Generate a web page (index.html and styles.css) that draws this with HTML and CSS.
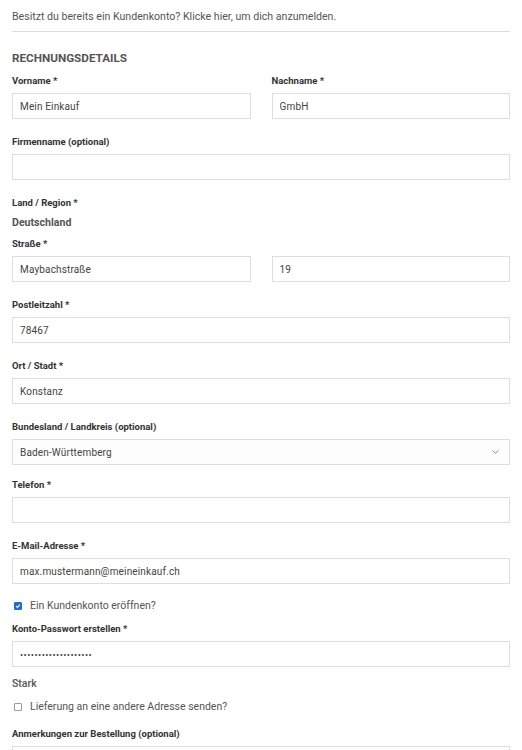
FILE: index.html
```html
<!DOCTYPE html>
<html lang="de">
<head>
<meta charset="utf-8">
<title>Kasse</title>
<link rel="stylesheet" href="styles.css">
</head>
<body>
<div class="page">
  <p class="login-note">Besitzt du bereits ein Kundenkonto? <a href="#" class="login-link">Klicke hier, um dich anzumelden.</a></p>
  <hr class="divider">
  <h3 class="section-title">RECHNUNGSDETAILS</h3>

  <div class="row two">
    <div class="field">
      <label class="label">Vorname *</label>
      <input class="input" type="text" value="Mein Einkauf">
    </div>
    <div class="field">
      <label class="label">Nachname *</label>
      <input class="input" type="text" value="GmbH">
    </div>
  </div>

  <div class="field">
    <label class="label">Firmenname (optional)</label>
    <input class="input" type="text" value="">
  </div>

  <div class="field field-static">
    <label class="label">Land / Region *</label>
    <strong class="static-value">Deutschland</strong>
  </div>

  <div class="field">
    <label class="label">Straße *</label>
    <div class="row two inner">
      <input class="input" type="text" value="Maybachstraße">
      <input class="input" type="text" value="19">
    </div>
  </div>

  <div class="field">
    <label class="label">Postleitzahl *</label>
    <input class="input" type="text" value="78467">
  </div>

  <div class="field">
    <label class="label">Ort / Stadt *</label>
    <input class="input" type="text" value="Konstanz">
  </div>

  <div class="field field-tight">
    <label class="label">Bundesland / Landkreis (optional)</label>
    <div class="select">
      <span class="select-value">Baden-Württemberg</span>
      <svg class="chevron" width="7" height="4" viewBox="0 0 7 4"><path d="M0.5 0.5 L3.5 3.3 L6.5 0.5" fill="none" stroke="#888" stroke-width="1"/></svg>
    </div>
  </div>

  <div class="field">
    <label class="label">Telefon *</label>
    <input class="input" type="tel" value="">
  </div>

  <div class="field field-tight">
    <label class="label">E-Mail-Adresse *</label>
    <input class="input" type="email" value="max.mustermann@meineinkauf.ch">
  </div>

  <label class="check-row check-account">
    <span class="box checked"><svg width="8" height="8" viewBox="0 0 8 8"><path d="M1.5 4.2 L3.2 5.9 L6.6 2.2" fill="none" stroke="#fff" stroke-width="1.4"/></svg></span>
    <span class="check-text">Ein Kundenkonto eröffnen?</span>
  </label>

  <div class="field field-pass">
    <label class="label">Konto-Passwort erstellen *</label>
    <input class="input input-pass" type="password" value="abcdefghijklmnopqrst">
  </div>

  <div class="strength">Stark</div>

  <label class="check-row check-ship">
    <span class="box"></span>
    <span class="check-text">Lieferung an eine andere Adresse senden?</span>
  </label>

  <div class="field">
    <label class="label">Anmerkungen zur Bestellung (optional)</label>
    <textarea class="input textarea"></textarea>
  </div>
</div>
</body>
</html>
```

FILE: styles.css
```css
* { box-sizing: border-box; }

html, body {
  margin: 0;
  padding: 0;
  background: #fff;
}

body {
  font-family: Roboto, "Liberation Sans", Arial, sans-serif;
  color: #555;
}

.page {
  padding: 8px 12px 0 12px;
}

.login-note {
  margin: 0 0 5px;
  font-size: 10.6px;
  line-height: 18px;
  color: #555;
}

.login-link {
  color: #555;
  text-decoration: none;
}

.divider {
  border: 0;
  border-top: 1px solid #dcdcdc;
  margin: 0 0 18px;
  height: 0;
}

.section-title {
  margin: 0 0 8px;
  font-size: 11.7px;
  line-height: 16px;
  font-weight: 700;
  color: #555;
}

.row.two {
  display: grid;
  grid-template-columns: 1fr 1fr;
  column-gap: 21px;
}

.field {
  display: flex;
  flex-direction: column;
  margin-bottom: 16px;
}

.row.two > .field { margin-bottom: 16px; }

.field-static { margin-bottom: 6px; }
.field-tight { margin-bottom: 13px; }
.field-pass { margin-bottom: 9px; }

.label {
  display: block;
  font-size: 9.5px;
  line-height: 14px;
  font-weight: 700;
  color: #333;
  margin-bottom: 5px;
}

.static-value {
  font-size: 10.6px;
  line-height: 16px;
  font-weight: 700;
  color: #555;
}

.input {
  display: block;
  width: 100%;
  height: 26px;
  margin: 0;
  padding: 0 7px;
  border: 1px solid #dedede;
  border-radius: 0;
  background: #fff;
  font-family: Roboto, "Liberation Sans", Arial, sans-serif;
  font-size: 10px;
  letter-spacing: 0.15px;
  color: #444;
  outline: none;
}

.input-pass {
  font-size: 9.5px;
  letter-spacing: 0.4px;
}

.textarea {
  height: 60px;
  resize: none;
}

.select {
  display: flex;
  align-items: center;
  justify-content: space-between;
  height: 26px;
  padding: 0 10px 0 7px;
  border: 1px solid #dedede;
  background: #fdfdfd;
  font-size: 10px;
  letter-spacing: 0.15px;
  color: #444;
}

.check-row {
  display: flex;
  align-items: center;
  height: 18px;
  padding-left: 2px;
}

.check-account { margin-bottom: 7px; }
.check-ship { margin-top: 6px; margin-bottom: 11px; }

.box {
  width: 8px;
  height: 8px;
  border: 1px solid #9a9a9a;
  border-radius: 1px;
  background: #fff;
  display: flex;
  align-items: center;
  justify-content: center;
  margin-right: 8px;
}

.box.checked {
  background: #1f6fd1;
  border-color: #1f6fd1;
}

.box svg { display: block; }

.check-text {
  font-size: 10.5px;
  line-height: 18px;
  color: #555;
}

.strength {
  font-size: 10.5px;
  line-height: 16px;
  font-weight: 500;
  color: #555;
}
```
